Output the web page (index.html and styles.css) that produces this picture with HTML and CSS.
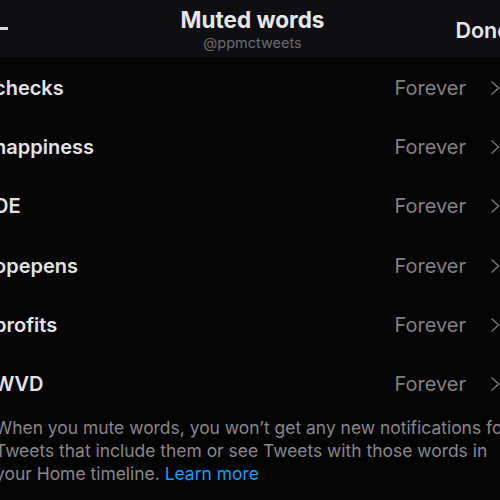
FILE: index.html
```html
<!DOCTYPE html>
<html lang="en">
<head>
<meta charset="utf-8">
<title>Muted words</title>
<link rel="stylesheet" href="styles.css">
</head>
<body>
<div class="screen">
  <header class="topbar">
    <div class="back"><span class="back-line"></span></div>
    <div class="title">
      <div class="title-main">Muted words</div>
      <div class="title-sub">@ppmctweets</div>
    </div>
    <div class="done">Done</div>
  </header>
  <ul class="list">
    <li class="row"><span class="word">checks</span><span class="dur">Forever</span><svg class="chev" viewBox="0 0 10 16"><path d="M1.5 1.5 L8.5 8 L1.5 14.5"/></svg></li>
    <li class="row"><span class="word">happiness</span><span class="dur">Forever</span><svg class="chev" viewBox="0 0 10 16"><path d="M1.5 1.5 L8.5 8 L1.5 14.5"/></svg></li>
    <li class="row"><span class="word">DE</span><span class="dur">Forever</span><svg class="chev" viewBox="0 0 10 16"><path d="M1.5 1.5 L8.5 8 L1.5 14.5"/></svg></li>
    <li class="row"><span class="word">opepens</span><span class="dur">Forever</span><svg class="chev" viewBox="0 0 10 16"><path d="M1.5 1.5 L8.5 8 L1.5 14.5"/></svg></li>
    <li class="row"><span class="word">profits</span><span class="dur">Forever</span><svg class="chev" viewBox="0 0 10 16"><path d="M1.5 1.5 L8.5 8 L1.5 14.5"/></svg></li>
    <li class="row"><span class="word">WVD</span><span class="dur">Forever</span><svg class="chev" viewBox="0 0 10 16"><path d="M1.5 1.5 L8.5 8 L1.5 14.5"/></svg></li>
  </ul>
  <p class="note">When you mute words, you won’t get any new notifications for Tweets that include them or see Tweets with those words in your Home timeline. <a class="link" href="#">Learn more</a></p>
</div>
</body>
</html>
```
FILE: styles.css
```css
html, body {
  margin: 0;
  padding: 0;
  background: #050405;
  overflow: hidden;
  width: 500px;
  height: 500px;
}
.screen {
  width: 542px;
  margin-left: -21px;
  font-family: Inter, "Noto Sans", sans-serif;
  color: #e8e8ec;
}
.topbar {
  height: 57px;
  background: #0f0e11;
  display: flex;
  align-items: flex-start;
  padding: 0 11px 0 16px;
  box-sizing: border-box;
}
.back {
  width: 65px;
  padding-top: 27px;
}
.back-line {
  display: block;
  width: 13px;
  height: 3px;
  background: #d8d8dc;
}
.title {
  flex: 1;
  text-align: center;
  padding-top: 6px;
}
.title-main {
  font-size: 22.5px;
  font-weight: 700;
  line-height: 27px;
  color: #e6e6ea;
}
.title-sub {
  font-size: 14.5px;
  line-height: 18px;
  color: #6c6b70;
  margin-top: 1px;
}
.done {
  width: 65px;
  text-align: right;
  padding-top: 17px;
  font-size: 21.5px;
  font-weight: 600;
  color: #e6e6ea;
}
.list {
  list-style: none;
  margin: 0;
  padding: 1px 0 0 0;
}
.row {
  height: 59.3px;
  display: flex;
  align-items: center;
  padding: 0 21px 0 16px;
}
.word {
  flex: 1;
  font-size: 20px;
  font-weight: 600;
  color: #e3e3e7;
  margin-left: -1px;
}
.dur {
  font-size: 20px;
  color: #828186;
  margin-right: 24px;
}
.chev {
  width: 10px;
  height: 16px;
  fill: none;
  stroke: #6f6e73;
  stroke-width: 1.6;
}
.note {
  margin: 2px 0 0 0;
  padding: 0 10px 0 16px;
  font-size: 17.45px;
  line-height: 23px;
  color: #88878c;
}
.link {
  color: #1d9bf0;
  text-decoration: none;
}
```
